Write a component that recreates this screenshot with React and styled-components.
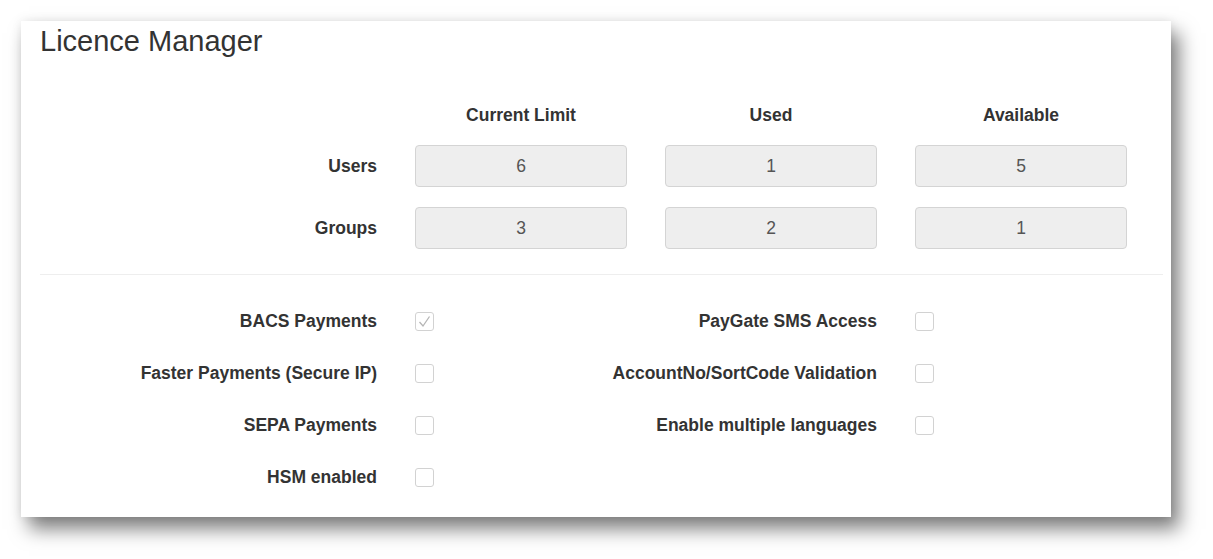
import styled, { createGlobalStyle } from "styled-components";

const GlobalStyle = createGlobalStyle`
  html, body {
    margin: 0;
    background: #fff;
    font-family: "Liberation Sans", Arial, sans-serif;
    color: #333;
  }
`;

const Page = styled.div`
  padding: 21px 42px 42px 21px;
`;

const Card = styled.section`
  width: 1150px;
  height: 496px;
  box-sizing: border-box;
  background: #fff;
  padding: 3px 8px 0 19px;
  box-shadow: 8px 12px 18px rgba(0, 0, 0, 0.5), 0 0 10px rgba(0, 0, 0, 0.08);
`;

const Title = styled.h1`
  margin: 0;
  font-size: 29px;
  font-weight: normal;
  line-height: 35px;
  color: #333;
`;

const LimitGrid = styled.div`
  display: grid;
  grid-template-columns: 337px repeat(3, 212px);
  column-gap: 38px;
  row-gap: 20px;
  align-items: center;
  margin-top: 46px;
`;

const ColumnHead = styled.div`
  font-size: 17.5px;
  font-weight: bold;
  line-height: 20px;
  text-align: center;
`;

const RowLabel = styled.div`
  font-size: 17.5px;
  font-weight: bold;
  text-align: right;
`;

const ValueBox = styled.div`
  height: 42px;
  box-sizing: border-box;
  background: #eee;
  border: 1px solid #d4d4d4;
  border-radius: 4px;
  display: flex;
  align-items: center;
  justify-content: center;
  font-size: 17.5px;
  color: #555;
`;

const Divider = styled.hr`
  margin: 25px 0 0;
  border: 0;
  border-top: 1px solid #eee;
`;

const FeatureGrid = styled.div`
  display: grid;
  grid-template-columns: 500px 500px;
  row-gap: 33px;
  margin-top: 36px;
`;

const Feature = styled.label`
  display: grid;
  grid-template-columns: 337px 19px;
  column-gap: 38px;
  align-items: center;
  height: 19px;
  font-size: 17.5px;
  font-weight: bold;
`;

const FeatureName = styled.span`
  text-align: right;
  white-space: nowrap;
`;

const Check = styled.span`
  width: 19px;
  height: 19px;
  box-sizing: border-box;
  border: 1px solid #d2d2d2;
  border-radius: 3px;
  display: flex;
  align-items: center;
  justify-content: center;
`;

const columns = ["Current Limit", "Used", "Available"];

const limits = [
  { name: "Users", values: [6, 1, 5] },
  { name: "Groups", values: [3, 2, 1] },
];

const features = [
  { name: "BACS Payments", checked: true },
  { name: "PayGate SMS Access" },
  { name: "Faster Payments (Secure IP)" },
  { name: "AccountNo/SortCode Validation" },
  { name: "SEPA Payments" },
  { name: "Enable multiple languages" },
  { name: "HSM enabled" },
];

function Tick() {
  return (
    <svg width="13" height="13" viewBox="0 0 13 13">
      <path d="M1.5 7 L5 11 L11.5 1.5" fill="none" stroke="#b5b5b5" strokeWidth="1.3" />
    </svg>
  );
}

export default function App() {
  return (
    <Page>
      <GlobalStyle />
      <Card>
        <Title>Licence Manager</Title>
        <LimitGrid>
          <div />
          {columns.map((c) => (
            <ColumnHead key={c}>{c}</ColumnHead>
          ))}
          {limits.map((row) => [
            <RowLabel key={row.name}>{row.name}</RowLabel>,
            ...row.values.map((v, i) => (
              <ValueBox key={row.name + i}>{v}</ValueBox>
            )),
          ])}
        </LimitGrid>
        <Divider />
        <FeatureGrid>
          {features.map((f) => (
            <Feature key={f.name}>
              <FeatureName>{f.name}</FeatureName>
              <Check>{f.checked && <Tick />}</Check>
            </Feature>
          ))}
        </FeatureGrid>
      </Card>
    </Page>
  );
}
